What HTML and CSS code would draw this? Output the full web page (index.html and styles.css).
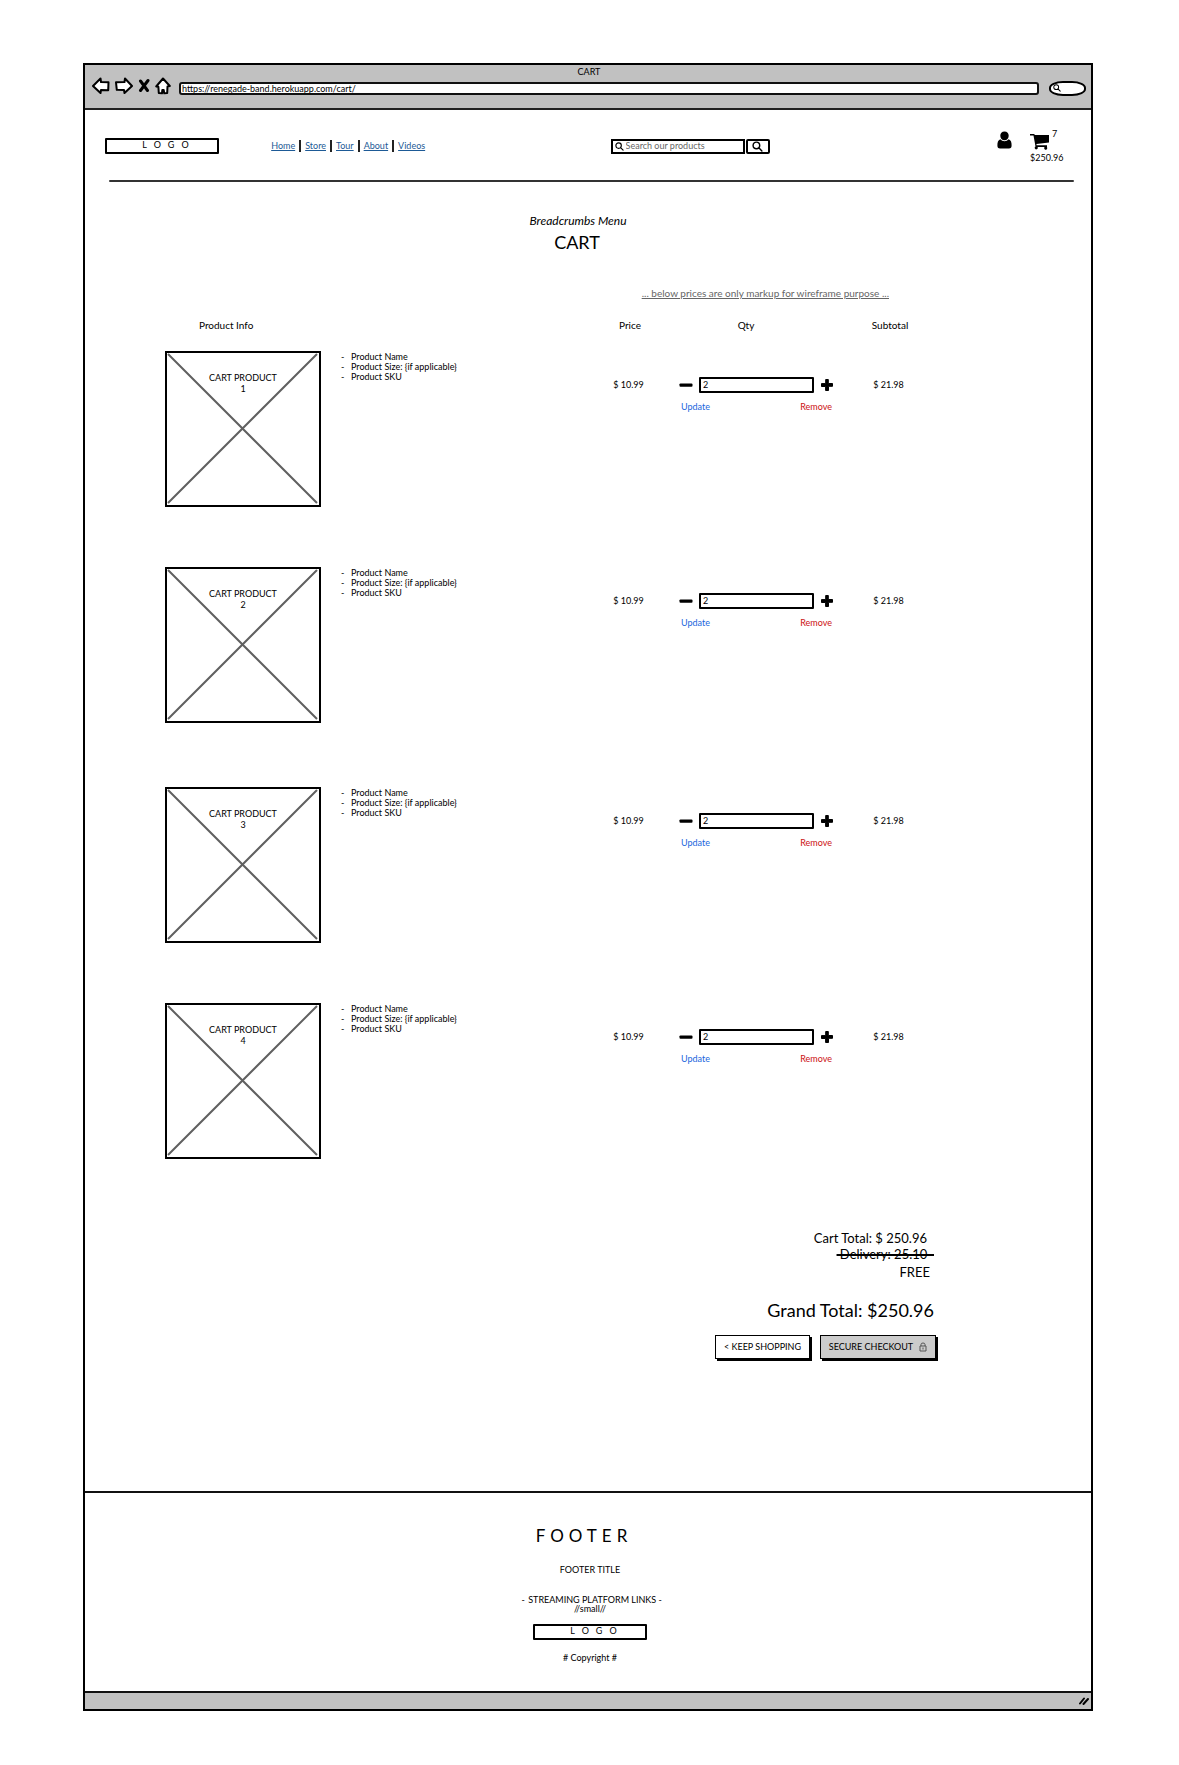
FILE: index.html
```html
<!DOCTYPE html>
<html lang="en">
<head>
<meta charset="utf-8">
<title>CART</title>
<link rel="stylesheet" href="styles.css">
</head>
<body>
<svg class="defs" aria-hidden="true">
  <symbol id="lens" viewBox="0 0 10 10"><path d="M1 4C1 2 2.3 1 4 1s3 1.200 3 3-1.300 3-3 3-3-1-3-3zM6.200 6.200L9 9" fill="none" stroke="#000" stroke-width="1.300" stroke-linecap="round"/></symbol>
  <symbol id="minus" viewBox="0 0 14 14"><path d="M1.500 5.500h11q1 0 1 1v1.400q0 .800-1 .800h-11q-1 0-1-1V6.300q0-.800 1-.800z"/></symbol>
  <symbol id="plus" viewBox="0 0 14 14"><path d="M5.700 1.500h2.600v4H12.500v2.800H8.500V12.500H5.600V8.500H1.500V5.600h4.200z" stroke="#000" stroke-linejoin="round"/></symbol>
  <symbol id="cross" viewBox="0 0 152 152"><path d="M1 1L150 150M150 1L1 150" stroke="#606060" stroke-width="2" fill="none"/></symbol>
</svg>
<div class="window">
  <div class="chrome">
    <div class="chrome-title">CART</div>
    <div class="chrome-row">
      <div class="chrome-icons">
        <svg width="18" height="18" viewBox="0 0 18 18"><path d="M1 9L8.500 1.500 9 5l7.500.300-.300 8L9 13 8.500 16z"/></svg>
        <svg width="18" height="18" viewBox="0 0 18 18"><path d="M17 9L10 1.500 9.500 5 1 5.300l.800 7.500 7.200.200.500 3z"/></svg>
        <svg width="12" height="18" viewBox="0 0 12 18"><path class="stop" d="M2.500 4L9.500 13.500M10 3.500L2.500 13.500"/></svg>
        <svg width="16" height="18" viewBox="0 0 16 18"><path d="M8 1.500L14.800 9l-2.300.500-.300 6.500-3 .300-.500-3.300h-1.400L7 16.300l-3.200-.300L3.400 9.800 1.200 9.500z"/></svg>
      </div>
      <input class="url" type="text" aria-label="Address" value="https://renegade-band.herokuapp.com/cart/">
      <button class="chrome-search" type="button" aria-label="Search"><svg width="8" height="8"><use href="#lens"/></svg></button>
    </div>
  </div>

  <header class="header">
    <a class="logo" href="#">LOGO</a>
    <nav class="nav">
      <a href="#">Home</a><a href="#">Store</a><a href="#">Tour</a><a href="#">About</a><a href="#">Videos</a>
    </nav>
    <form class="search">
      <label class="search-box"><svg width="9" height="9"><use href="#lens"/></svg><input type="text" aria-label="Search our products" placeholder="Search our products"></label>
      <button type="button" aria-label="Search"><svg width="11" height="11"><use href="#lens"/></svg></button>
    </form>
    <div class="account">
      <a href="#" aria-label="Account"><svg width="15" height="18" viewBox="0 0 15 18"><path d="M7.500.500c2.700 0 4.200 1.800 4.200 4.200S10 9.200 7.500 9.200 3.300 7.200 3.300 4.700 4.800.500 7.500.500zM3.300 8.200c2.200 2.600 6.200 2.600 8.400 0 2.300.900 3 3.300 2.900 6.300 0 2-.700 3-2.700 3H3.100c-2 0-2.700-1-2.700-3-.100-3 .600-5.400 2.900-6.300z"/></svg></a>
      <a class="basket" href="#">
        <span class="basket-top"><svg width="20" height="17" viewBox="0 0 20 17"><path d="M0 1h4l1 1h14v7.500L6.500 11v1.300H17V14h-.300a1.500 1.500 0 1 1-2 0H7.500a1.500 1.500 0 1 1-2-.400L3.500 2.500H0z"/></svg><span>7</span></span>
        <span>$250.96</span>
      </a>
    </div>
  </header>
  <hr class="rule">

  <main>
    <p class="breadcrumbs">Breadcrumbs Menu</p>
    <h1>CART</h1>
    <p class="note">... below prices are only markup for wireframe purpose ...</p>

    <table class="cart">
      <colgroup><col><col class="col-price"><col class="col-qty"><col class="col-subtotal"></colgroup>
      <thead><tr><th class="head-info">Product Info</th><th>Price</th><th class="head-qty">Qty</th><th>Subtotal</th></tr></thead>
      <tbody>
        <tr class="item">
          <td><div class="product"><div class="picture"><svg><use href="#cross"/></svg><span>CART PRODUCT<br>1</span></div><ul class="details"><li>Product Name</li><li>Product Size: {if applicable}</li><li>Product SKU</li></ul></div></td>
          <td class="amount">$ 10.99</td>
          <td><div class="stepper"><button type="button" aria-label="Less"><svg width="14" height="14"><use href="#minus"/></svg></button><input type="text" aria-label="Quantity" value="2"><button type="button" aria-label="More"><svg width="14" height="14"><use href="#plus"/></svg></button></div><div class="actions"><a class="update" href="#">Update</a><a class="remove" href="#">Remove</a></div></td>
          <td class="amount">$ 21.98</td>
        </tr>
        <tr class="item item-spaced">
          <td><div class="product"><div class="picture"><svg><use href="#cross"/></svg><span>CART PRODUCT<br>2</span></div><ul class="details"><li>Product Name</li><li>Product Size: {if applicable}</li><li>Product SKU</li></ul></div></td>
          <td class="amount">$ 10.99</td>
          <td><div class="stepper"><button type="button" aria-label="Less"><svg width="14" height="14"><use href="#minus"/></svg></button><input type="text" aria-label="Quantity" value="2"><button type="button" aria-label="More"><svg width="14" height="14"><use href="#plus"/></svg></button></div><div class="actions"><a class="update" href="#">Update</a><a class="remove" href="#">Remove</a></div></td>
          <td class="amount">$ 21.98</td>
        </tr>
        <tr class="item">
          <td><div class="product"><div class="picture"><svg><use href="#cross"/></svg><span>CART PRODUCT<br>3</span></div><ul class="details"><li>Product Name</li><li>Product Size: {if applicable}</li><li>Product SKU</li></ul></div></td>
          <td class="amount">$ 10.99</td>
          <td><div class="stepper"><button type="button" aria-label="Less"><svg width="14" height="14"><use href="#minus"/></svg></button><input type="text" aria-label="Quantity" value="2"><button type="button" aria-label="More"><svg width="14" height="14"><use href="#plus"/></svg></button></div><div class="actions"><a class="update" href="#">Update</a><a class="remove" href="#">Remove</a></div></td>
          <td class="amount">$ 21.98</td>
        </tr>
        <tr class="item">
          <td><div class="product"><div class="picture"><svg><use href="#cross"/></svg><span>CART PRODUCT<br>4</span></div><ul class="details"><li>Product Name</li><li>Product Size: {if applicable}</li><li>Product SKU</li></ul></div></td>
          <td class="amount">$ 10.99</td>
          <td><div class="stepper"><button type="button" aria-label="Less"><svg width="14" height="14"><use href="#minus"/></svg></button><input type="text" aria-label="Quantity" value="2"><button type="button" aria-label="More"><svg width="14" height="14"><use href="#plus"/></svg></button></div><div class="actions"><a class="update" href="#">Update</a><a class="remove" href="#">Remove</a></div></td>
          <td class="amount">$ 21.98</td>
        </tr>
      </tbody>
    </table>

    <section class="totals">
      <p class="total-line">Cart Total: $ 250.96</p>
      <p class="total-line delivery"><s>&nbsp;Delivery: 25.10&nbsp;&nbsp;</s></p>
      <p class="free">FREE</p>
      <p class="grand">Grand Total: $250.96</p>
      <div class="buttons">
        <button type="button">&lt; KEEP SHOPPING</button>
        <button class="primary" type="button">SECURE CHECKOUT <svg width="8" height="10" viewBox="0 0 8 10"><path d="M1 4h6v5H1zM2 4V2.500Q2 1 4 1t2 1.500V4M4 5.500v2" fill="none" stroke="#555"/></svg></button>
      </div>
    </section>
  </main>

  <footer class="footer">
    <h2>FOOTER</h2>
    <p class="footer-title">FOOTER TITLE</p>
    <ul class="footer-links"><li>STREAMING PLATFORM LINKS -<br>//small//</li></ul>
    <a class="logo" href="#">LOGO</a>
    <p class="copyright"># Copyright #</p>
  </footer>
  <div class="status"><svg width="10" height="10" viewBox="0 0 10 10"><path d="M1 7.500L5 2.500M4.500 8L9 3" stroke="#000" stroke-width="2" stroke-linecap="round"/></svg></div>
</div>
</body>
</html>
```
FILE: styles.css
```css
* { box-sizing: border-box; }
body {
  margin: 0;
  padding: 63px 86px 54px 83px;
  background: #fff;
  color: #000;
  font: 9px/10px Lato, "Liberation Sans", sans-serif;
}
p, h1, h2, ul { margin: 0; padding: 0; font-weight: 400; }
ul { list-style: none; }
svg { display: block; flex: none; }
button, input { font: inherit; color: inherit; }
button { padding: 0; border: 0; background: none; }
input { min-width: 0; outline: 0; }
a { color: inherit; text-decoration: none; }
.defs { position: absolute; width: 0; height: 0; }

.window { border: 2px solid #000; }
.chrome { height: 45px; padding: 2px 5px 0 7px; background: #c1c1c1; border-bottom: 2px solid #222; }
.chrome-title { text-align: center; }
.chrome-row { display: flex; align-items: center; height: 18px; }
.chrome-icons { display: flex; gap: 5px; margin-right: 8px; }
.chrome-icons path { fill: #fff; stroke: #000; stroke-width: 2; stroke-linejoin: round; }
.chrome-icons .stop { stroke-width: 3; stroke-linecap: round; }
.url { flex: 1; height: 13px; margin-top: 4px; padding: 0 1px; border: 2px solid #111; border-radius: 3px; background: #fff; }
.chrome-search { width: 37px; height: 15px; margin: 4px 0 0 10px; padding-left: 2px; border: 2px solid #000; border-radius: 14px / 7px; background: #fff; }

.header { display: grid; grid-template-columns: 166fr 339fr 386fr 64px; align-items: center; padding: 20px 30px 18px 20px; }
.logo { display: block; width: 114px; height: 16px; border: 2px solid #000; border-radius: 1px; line-height: 10px; letter-spacing: 7px; text-align: center; padding-left: 14px; }
.nav { display: flex; line-height: 12px; }
.nav a { color: #1d5a96; text-decoration: underline; }
.nav a + a { margin-left: 4px; padding-left: 4px; border-left: 2px solid #222; }
.search { display: flex; gap: 1px; }
.search-box { display: flex; align-items: center; width: 134px; height: 15px; padding-left: 2px; border: 2px solid #000; }
.search-box input { flex: 1; width: 0; height: 10px; padding: 0 0 0 2px; border: 0; }
.search-box input::placeholder { color: #666; opacity: 1; }
.search button { display: grid; place-items: center; width: 24px; height: 15px; border: 2px solid #000; border-radius: 2px; }
.account { display: flex; gap: 18px; height: 32px; padding-top: 1px; }
.basket, .basket > span { display: block; }
.basket .basket-top { display: flex; gap: 2px; height: 22px; }
.basket-top svg { margin-top: 2px; }
.basket-top span { margin-top: -2px; }
.rule { height: 2px; margin: 0 17px 0 24px; border: 0; background: #333; border-radius: 2px; }

.breadcrumbs { padding-top: 31px; text-align: center; font-size: 12px; line-height: 16px; font-style: italic; padding-right: 20px; }
h1 { padding-right: 22px; text-align: center; font-size: 18px; line-height: 26px; }
.note { margin: 32px 202px 0 0; text-align: right; font-size: 10px; line-height: 12px; color: #666; text-decoration: underline; }

.cart { width: calc(100% - 236px); margin: 21px 156px 0 80px; border-collapse: collapse; table-layout: fixed; }
.cart th, .cart td { padding: 0; vertical-align: top; }
.cart th { height: 31px; font-weight: 400; font-size: 10px; }
.cart .head-info { padding-left: 34px; text-align: left; }
.cart .head-qty { padding-right: 20px; }
.col-price { width: 74px; }
.col-qty { width: 178px; }
.col-subtotal { width: 90px; }
.item { height: 216px; }
.item-spaced { height: 220px; }
.product { display: flex; gap: 20px; }
.picture { display: grid; width: 156px; height: 156px; border: 2px solid #000; }
.picture svg, .picture span { grid-area: 1 / 1; }
.picture svg { width: 100%; height: 100%; }
.picture span { padding-top: 19px; text-align: center; line-height: 11px; }
.details { padding-top: 1px; line-height: 10px; }
.details li::before { content: "-"; display: inline-block; width: 10px; }
.cart .amount { padding: 29px 3px 0 0; text-align: center; }
.stepper { display: flex; align-items: center; gap: 6px; padding: 26px 11px 0 12px; }
.stepper input { flex: 1; height: 16px; padding: 0 2px 2px; border: 2px solid #000; border-radius: 1px; }
.actions { display: flex; justify-content: space-between; padding: 9px 13px 0 14px; }
.update { color: #1a66dd; }
.remove { color: #cc1111; }

.totals { padding-top: 11px; text-align: right; }
.total-line { padding-right: 164px; font-size: 13px; line-height: 16px; }
.delivery { padding-right: 157px; }
.total-line s { text-decoration-thickness: 2px; }
.free { padding-right: 161px; font-size: 13px; line-height: 20px; }
.grand { padding: 16px 157px 0 0; font-size: 18px; line-height: 24px; }
.buttons { display: flex; justify-content: flex-end; gap: 10px; padding: 13px 155px 132px 0; }
.buttons button { display: flex; align-items: center; justify-content: center; gap: 6px; width: 95px; height: 24px; border: 1px solid #000; box-shadow: 2px 2px #000; background: #fff; }
.buttons .primary { width: 116px; background: #ccc; }

.footer { display: flex; flex-direction: column; align-items: center; padding: 31px 0 28px 4px; border-top: 2px solid #111; }
.footer h2 { font-size: 17px; line-height: 24px; letter-spacing: 5px; padding-right: 12px; }
.footer-title { padding: 17px 0 20px; }
.footer-links { text-align: center; line-height: 9px; }
.footer-links li::before { content: "-"; display: inline-block; width: 10px; }
.footer .logo { margin: 11px 0 13px; }
.status { display: flex; justify-content: flex-end; align-items: center; height: 18px; padding-right: 2px; background: #c1c1c1; border-top: 2px solid #111; }
```
